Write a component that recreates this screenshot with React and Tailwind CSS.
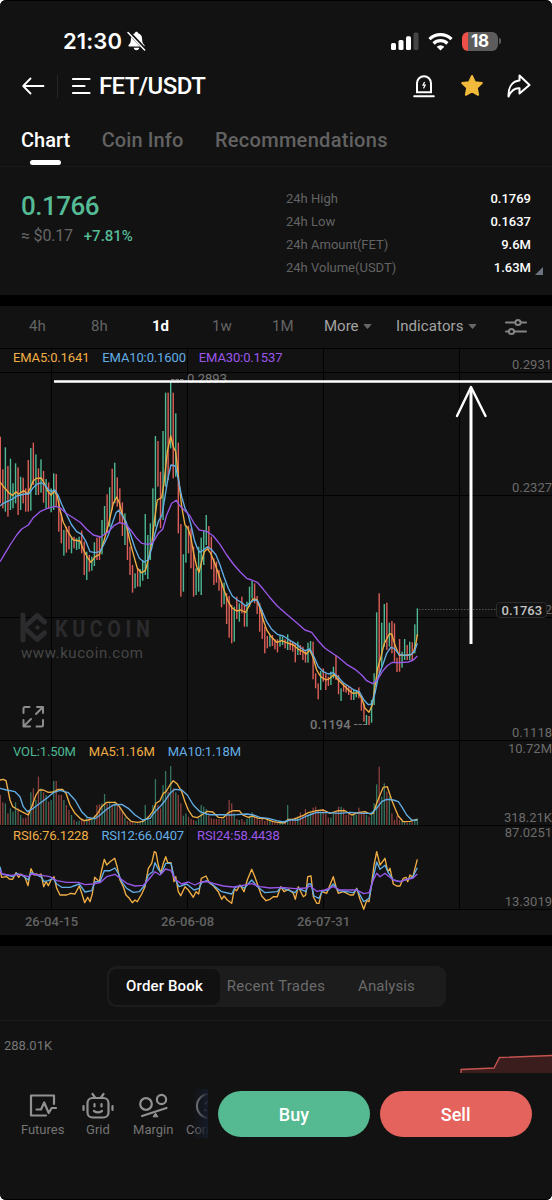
import React, { useState } from "react";

const GREEN = "#4db892";
const RED = "#dc5f59";
const ORANGE = "#f0ae45";
const BLUE = "#63aee6";
const PURPLE = "#9a57ea";

const STEP = 2.543;

// Candles: high, low (thirds of a pixel below the plot origin), g = up / r = down
const CANDLES_A =
  "230 430 r,328 445 r,262 455 g,318 470 r,296 450 g,370 445 g,310 430 g,322 465 r,350 450 g,353 430 r,385 455 r,300 455 r,264 452 g,248 375 r,283 405 g,325 405 r,298 398 g,333 428 r,357 445 g,367 445 r,385 457 g,340 450 g,342 440 r,420 515 r,460 550 r,510 587 g,500 578 r,498 568 r,530 580 g,530 565 r,535 570 g,530 567 g,512 580 r,545 645 r,575 660 g,585 635 r,590 632 g,547 618 g,533 600 r,530 600 r,480 583 g,438 525 g,403 520 r,382 500 g,326 450 r,308 430 g,352 440 r,385 490 r,427 528 r,460 555 g,500 600 r,560 645 r,615 698 r,640 685 g,625 680 r,627 680 g,600 662 g,462 645 g,525 657 g,490 600 g,385 530 g,228 500 g,243 380 r,335 505 r,213 480 g,98 380 g,98 360 r,65 265 g,98 355 r,160 350 g,248 520 r,492 710 r,583 695 g,497 608 g,497 580 r,505 625 r,560 710 r,625 705 g,560 695 g";
const CANDLES_B =
  "203 375 g,180 285 g,135 225 g,168 240 r,200 298 r,265 345 r,275 338 r,300 362 r,335 412 r,338 403 g,370 462 r,378 503 r,405 520 r,410 515 g,380 447 r,400 455 g,380 430 r,405 470 r,395 470 g,350 410 g,333 385 g,340 400 r,378 432 r,400 485 r,420 507 r,470 550 r,498 535 r,495 530 g,495 528 r,508 538 r,508 547 r,497 530 g,500 525 g,508 535 r,493 540 g,513 540 r,515 545 r,520 577 r,515 555 g,525 555 r,530 570 r,540 578 r,518 578 g,513 550 g,515 628 r,610 655 r,640 688 r,603 660 g,595 635 r,610 660 r,620 648 r,605 645 g,590 625 g,555 630 r,615 673 r,655 693 g,640 665 r,645 668 r,648 675 r,655 690 r,660 690 g,660 682 g,652 685 r,680 722 r,700 755 r,735 765 g,738 765 r,690 758 g,610 705 g,427 640 g,370 610 r,458 590 g,402 530 g,398 540 r,458 530 g,453 550 r,460 575 r,563 606 r,507 605 r,545 593 g,507 570 g,525 570 r,515 570 g,517 570 r,463 550 g,415 500 g";

const VOLUMES = [
  90, 68, 65, 35, 50, 40, 68, 50, 30, 20, 22, 45, 98, 110, 75, 145, 110, 98, 90, 70, 75, 132, 132, 90, 90, 75, 60, 45,
  30, 15, 10, 13, 15, 15, 22, 22, 18, 28, 60, 62, 65, 93, 65, 70, 62, 70, 60, 55, 40, 22, 12, 10, 8, 5, 5, 8, 15, 60,
  25, 15, 60, 138, 60, 50, 120, 162, 100, 177, 110, 98, 90, 65, 28, 35, 25, 18, 15, 12, 20, 60, 55, 48, 30, 20, 18, 18,
  18, 20, 18, 30, 75, 65, 35, 18, 15, 18, 10, 18, 25, 38, 22, 18, 15, 18, 12, 15, 15, 10, 8, 8, 6, 6, 8, 60, 18, 20,
  22, 25, 38, 30, 48, 30, 38, 52, 55, 45, 40, 48, 35, 22, 22, 35, 38, 55, 55, 50, 30, 35, 25, 30, 30, 52, 40, 40, 30,
  25, 40, 65, 122, 175, 85, 125, 100, 85, 35, 15, 28, 15, 12, 10, 8, 8, 10, 15, 20,
];

const parseCandles = (src, top) =>
  src.split(",").map((item) => {
    const [high, low, side] = item.split(" ");
    return { high: top + high / 3, low: top + low / 3, up: side === "g" };
  });

const candles = [...parseCandles(CANDLES_A, 12), ...parseCandles(CANDLES_B, 122)];

// Turns "x,y x,y" in thirds of a pixel into svg points
const pts = (src, left, top) =>
  src
    .split(" ")
    .map((p) => {
      const [x, y] = p.split(",");
      return `${(left + x / 3).toFixed(1)},${(top + y / 3).toFixed(1)}`;
    })
    .join(" ");

const LINES = [
  // EMA
  {
    color: ORANGE,
    points:
      pts("0,366 12,382 28,400 38,406 48,395 55,403 62,398 72,392 82,402 92,382 100,362 110,355 124,354 133,370 143,393 153,405 163,393 172,408 180,450 190,487 205,517 220,540 240,543 250,568 262,592 273,607 286,590 298,584 310,550 325,495 340,430 350,411 358,428 366,460 378,492 390,545 402,590 412,625 424,638 436,632 446,595 456,545 463,485 472,420 485,413 492,370 502,275 512,228 520,260 527,275 533,330 545,440 555,495 563,503 572,530 582,585 590,620 597,637 606,600", 0, 12) +
      " " +
      pts("13,245 22,236 32,250 45,282 60,325 72,360 85,395 95,413 110,423 122,420 137,427 147,408 158,387 170,388 180,415 190,450 200,480 215,502 230,517 245,512 260,518 280,525 295,538 310,545 318,552 330,540 340,565 350,600 362,620 378,630 390,625 402,613 415,630 430,645 445,660 458,670 475,668 485,685 495,715 507,727 517,705 525,650 533,595 543,560 553,520 560,507 568,492 575,492 585,525 597,555 610,556 630,555 640,548 648,520 652,493", 200, 122),
  },
  {
    color: BLUE,
    points:
      pts("0,438 10,430 22,424 36,418 50,408 62,405 75,402 86,402 98,385 110,373 124,368 136,376 146,390 155,394 165,390 174,405 185,433 200,465 215,495 230,515 245,523 258,545 270,575 285,578 300,575 312,553 325,525 337,490 348,458 356,451 366,465 378,485 392,525 405,565 418,595 432,606 445,600 455,565 465,520 475,485 486,465 495,410 505,350 513,315 526,318 533,350 545,410 555,445 563,460 573,495 583,540 592,565 600,577", 0, 12) +
      " " +
      pts("10,240 22,230 33,237 48,255 60,285 72,320 85,355 97,378 112,390 125,398 138,408 150,398 162,390 173,392 185,420 200,455 215,478 232,493 250,498 265,508 285,520 300,532 315,542 330,537 342,560 355,590 370,605 385,612 400,608 415,622 430,638 448,650 462,660 478,665 492,690 505,704 515,702 525,670 535,620 548,585 560,550 572,532 583,535 597,553 615,556 635,553 645,540 652,520", 200, 122),
  },
  {
    color: PURPLE,
    points:
      pts("0,605 15,580 32,552 50,525 65,507 85,495 100,473 120,455 140,446 165,439 180,443 200,461 222,475 242,488 260,508 280,525 302,531 325,515 342,497 358,488 376,492 392,510 410,535 425,550 445,553 460,546 475,520 488,508 500,465 515,430 529,421 540,438 555,452 570,468 582,490 598,510", 0, 12) +
      " " +
      pts("4,181 20,184 40,198 60,223 80,255 100,282 120,305 140,325 155,330 172,337 190,358 210,383 232,408 260,433 290,458 315,480 335,487 355,513 375,535 395,548 415,562 440,583 465,598 485,615 500,632 518,641 533,628 548,603 562,587 577,577 600,578 625,576 640,570 652,558", 200, 122),
  },
  // Volume averages
  {
    color: ORANGE,
    points:
      pts("0,120 10,118 18,122 24,150 30,180 38,200 50,207 65,215 85,225 95,200 108,165 118,150 130,150 145,157 160,156 175,148 187,148 198,160 210,195 225,220 240,235 252,242 265,240 280,235 292,222 305,200 320,187 345,187 355,195 368,215 380,232 393,244 412,247 430,244 445,232 458,215 468,190 480,182 490,160 498,155 510,135 520,122 532,132 545,155 555,185 565,210 578,230 592,233 605,225 622,214", 0, 392) +
      " " +
      pts("8,216 25,232 40,233 55,218 70,212 88,212 98,225 115,232 127,228 145,235 165,236 190,245 210,248 225,248 235,238 250,238 265,232 280,226 295,218 320,212 340,210 360,220 385,212 405,212 425,225 445,218 465,215 480,222 490,220 500,190 510,165 520,142 532,140 545,180 555,205 565,228 580,245 600,244 622,238", 210, 392),
  },
  {
    color: BLUE,
    points:
      pts("0,145 20,150 45,155 60,170 70,200 82,215 100,205 120,190 140,175 160,158 180,151 205,158 225,180 245,215 262,232 285,236 300,225 320,208 340,195 365,193 385,205 405,225 428,240 450,235 465,215 480,200 495,182 510,160 525,148 545,150 562,165 580,195 600,215 620,222", 0, 392) +
      " " +
      pts("0,224 40,224 60,225 80,224 110,222 130,225 150,232 175,235 200,242 220,246 240,240 265,240 290,228 320,217 350,218 390,220 420,217 460,220 485,220 500,205 515,185 530,178 550,180 565,185 575,200 590,225 605,240 622,241", 210, 392),
  },
  // RSI
  {
    color: ORANGE,
    points:
      pts("0,390 5,412 20,410 28,417 38,418 48,398 56,412 62,402 75,412 84,437 93,386 102,405 110,402 117,405 123,402 131,440 138,425 145,437 153,420 162,410 170,445 180,465 200,465 212,460 225,462 238,438 247,465 254,488 263,472 270,485 277,462 284,412 298,425 305,390 313,358 320,375 330,365 344,355 352,382 360,420 370,440 378,465 388,475 397,488 405,480 412,485 425,462 435,440 445,385 455,370 463,335 468,338 475,375 482,400 490,370 497,350 503,368 513,368 522,425 527,410 535,455 542,467 555,440 565,450 580,472 588,455 596,462 604,415 618,408 628,428", 0, 392) +
      " " +
      pts("10,437 25,455 35,478 42,468 52,480 65,490 73,447 80,452 90,435 102,455 112,420 125,388 135,412 145,440 155,468 168,482 180,478 190,470 202,470 212,440 222,455 235,448 250,460 256,478 265,440 280,470 287,465 293,410 303,408 310,470 320,490 327,490 335,455 350,460 358,440 370,410 378,440 385,460 400,455 420,465 430,465 440,445 450,478 461,508 470,482 477,485 485,430 492,375 500,335 510,375 525,355 533,395 540,385 550,432 560,438 570,438 580,415 588,412 593,425 600,405 608,412 615,385 622,358", 210, 392),
  },
  {
    color: BLUE,
    points:
      pts("0,380 5,402 20,405 38,410 50,400 70,408 85,420 93,398 110,405 125,412 132,425 145,422 160,415 170,432 185,442 210,442 238,432 255,456 275,452 285,425 300,425 313,392 330,392 345,384 355,400 365,425 380,445 400,457 418,455 435,435 445,405 458,395 465,368 475,388 485,400 497,370 513,370 522,410 537,440 560,432 582,450 597,445 605,428 620,422", 0, 392) +
      " " +
      pts("5,432 35,455 65,462 75,443 92,437 103,445 125,420 140,438 165,458 202,455 212,442 255,458 265,445 288,455 295,432 303,432 312,468 327,475 337,453 355,450 370,432 385,452 430,458 440,447 461,485 477,475 488,420 500,366 510,388 525,376 535,398 550,420 570,425 590,418 608,412 622,383", 210, 392),
  },
  {
    color: PURPLE,
    points:
      pts("0,390 6,402 35,406 60,403 85,410 95,402 125,406 150,410 170,422 200,427 235,427 255,434 278,432 300,428 320,410 345,403 360,415 380,430 405,438 430,436 445,420 465,395 480,405 497,387 513,392 525,418 545,432 565,426 585,435 605,425 625,425", 0, 392) +
      " " +
      pts("10,430 40,438 70,441 95,437 125,431 150,440 180,444 215,442 255,446 290,444 300,438 320,454 345,450 370,440 390,450 440,450 461,461 477,458 490,420 500,400 510,410 525,400 535,408 550,420 570,425 590,418 608,415 622,402", 210, 392),
  },
];

const AXIS_LABELS = [
  { y: 21, text: "0.2931" },
  { y: 144, text: "0.2327" },
  { y: 266, text: "0.1722" },
  { y: 389, text: "0.1118" },
  { y: 404.5, text: "10.72M" },
  { y: 473.5, text: "318.21K" },
  { y: 489, text: "87.0251" },
  { y: 558, text: "13.3019" },
];

const STATS = [
  ["24h High", "0.1769"],
  ["24h Low", "0.1637"],
  ["24h Amount(FET)", "9.6M"],
  ["24h Volume(USDT)", "1.63M"],
];

const StatusBar = () => (
  <div className="flex h-[59px] shrink-0 items-end justify-between pr-[51px] pb-[5px] pl-[63px]">
    <div className="flex items-center gap-[5px]">
      <span className="font-['Inter',sans-serif] text-[22px] leading-[26px] font-semibold tracking-[0.1px] text-white">
        21:30
      </span>
      <svg width="19" height="20" viewBox="0 0 19 20">
        <path
          d="M9.5 .8c.9 0 1.5.6 1.6 1.4 2.500.7 4 2.800 4 5.500 0 3.500.8 4.800 2.300 6.300.4.4.3 1.400-.5 1.400H2.100c-.8 0-.9-1-.5-1.400C3.100 12.500 3.900 11.200 3.900 7.700c0-2.700 1.500-4.800 4-5.500C8 1.400 8.600.8 9.500.8zM6.700 16.800h5.600c-.2 1.600-1.300 2.500-2.800 2.500s-2.600-.9-2.800-2.500z"
          fill="#fff"
        />
        <path d="M1.800 1.200 18.200 18.600" stroke="#121212" strokeWidth="3.400" />
        <path d="M1 1.500 17.600 18.900" stroke="#fff" strokeWidth="1.500" strokeLinecap="round" />
      </svg>
    </div>

    <div className="flex items-center gap-[9px] pb-[3px]">
      <svg width="28" height="20" viewBox="0 0 28 20">
        <rect x="0" y="12" width="5" height="7" rx="1.500" fill="#fff" />
        <rect x="7.500" y="9" width="5" height="10" rx="1.500" fill="#fff" />
        <rect x="15" y="5.200" width="5" height="13.800" rx="1.500" fill="#fff" />
        <rect x="22.500" y="1.500" width="5" height="17.500" rx="1.500" fill="#454545" />
      </svg>
      <svg width="25" height="19" viewBox="0 0 25 19">
        <g fill="none" stroke="#fff" strokeWidth="3.200">
          <path d="M1.500 7.100a15.800 15.800 0 0 1 22 0" />
          <path d="M5.600 11.500a9.800 9.800 0 0 1 13.800 0" />
        </g>
        <path d="M12.500 18.600 8.700 14.700a5.400 5.400 0 0 1 7.600 0z" fill="#fff" />
      </svg>
      <div className="flex items-center gap-px">
        <div className="flex h-[19px] w-[36px] items-center justify-center overflow-hidden rounded-[6px] bg-linear-to-r from-[#ee4f48] from-[18%] to-[#5c5c5c] to-[18%]">
          <span className="font-['Inter',sans-serif] text-[17px] leading-none font-bold tracking-[-0.3px] text-white">
            18
          </span>
        </div>
        <div className="h-[6px] w-[2px] rounded-r-full bg-[#5c5c5c]" />
      </div>
    </div>
  </div>
);

const Header = () => (
  <div className="flex h-[54px] shrink-0 items-center justify-between pr-[21px] pl-[22px]">
    <div className="flex items-center">
      <svg width="23" height="18" viewBox="0 0 23 18" fill="none" stroke="#fff" strokeWidth="1.800">
        <path d="M8.500 1.500 1.200 9l7.300 7.500M1.200 9H21.500" strokeLinecap="round" strokeLinejoin="round" />
      </svg>
      <div className="ml-[12px] h-[23px] w-px bg-[#262626]" />
      <svg className="ml-[14px]" width="20" height="18" viewBox="0 0 20 18" stroke="#fff" strokeWidth="2.200">
        <path d="M1 2h16.500M1 9h11.500M1 16h16.500" strokeLinecap="round" />
      </svg>
      <h1 className="ml-[7px] text-[24px] leading-7 font-medium tracking-[-0.600px] text-white">FET/USDT</h1>
    </div>
    <div className="flex items-center">
      <svg width="22" height="24" viewBox="0 0 22 24" fill="none" stroke="#fff" strokeWidth="2">
        <path d="M4 18.200V9.200a7 7 0 0 1 14 0v9z" />
        <path d="M1.200 22.300h19.600" strokeLinecap="round" />
        <path d="M11.600 8 10 11.200h2.200l-1.700 3.200" strokeWidth="1.200" />
      </svg>
      <svg className="ml-[25px]" width="24" height="24" viewBox="0 0 24 24">
        <path
          d="M12 2 14.900 8.200l6.900.9-5 4.800 1.300 6.900-6.100-3.400-6.100 3.400 1.300-6.900-5-4.800 6.900-.9z"
          fill="#f2b93b"
          stroke="#f2b93b"
          strokeWidth="2"
          strokeLinejoin="round"
        />
      </svg>
      <svg className="ml-[23px]" width="24" height="24" viewBox="0 0 24 24" fill="none" stroke="#fff" strokeWidth="2">
        <path
          d="M12.500 1.500 22.500 11 12.500 19.500v-5.200c-4.200-.5-8 1.500-11 8.200C1.200 13 5.300 7.300 12.500 6.600z"
          strokeLinejoin="round"
        />
      </svg>
    </div>
  </div>
);

const TABS = [
  { name: "Chart", tracking: "tracking-normal" },
  { name: "Coin Info", tracking: "tracking-[0.1px]" },
  { name: "Recommendations", tracking: "tracking-[0.3px]" },
];

const Tabs = () => {
  const [active, setActive] = useState("Chart");
  return (
    <div className="flex h-[54px] shrink-0 gap-[31.500px] border-b border-[#191919] pt-[14px] pl-[21px] text-[20px] leading-[26px] font-medium">
      {TABS.map(({ name, tracking }) => (
        <button
          key={name}
          onClick={() => setActive(name)}
          className={`flex flex-col items-center ${tracking} ${active === name ? "text-white" : "text-[#626262]"}`}
        >
          {name}
          {active === name && <span className="mt-[7px] h-[5px] w-[31px] rounded-full bg-white" />}
        </button>
      ))}
    </div>
  );
};

const Summary = () => (
  <div className="flex h-[128px] shrink-0 justify-between pr-[9px] pl-[21px]">
    <div className="pt-[24px]">
      <div className="text-[26px] leading-[30px] font-medium tracking-[-0.500px] text-[#55bb95]">0.1766</div>
      <div className="mt-[5px] flex gap-[11px] text-[16px] leading-5">
        <span className="tracking-[-0.200px] text-[#666]">≈ $0.17</span>
        <span className="text-[15px] font-medium text-[#55bb95]">+7.81%</span>
      </div>
    </div>
    <div className="flex items-end pb-[14px]">
      <div className="w-[245px] self-start pt-[20px]">
        {STATS.map(([label, value]) => (
          <div key={label} className="flex h-[23px] items-center justify-between text-[13px]">
            <span className="text-[#636363]">{label}</span>
            <span className="font-medium text-white">{value}</span>
          </div>
        ))}
      </div>
      <svg className="mb-[6px] ml-[4px]" width="8" height="8" viewBox="0 0 8 8">
        <path d="M8 0v8H0z" fill="#6d7482" />
      </svg>
    </div>
  </div>
);

const Caret = () => (
  <svg width="9" height="7" viewBox="0 0 9 7">
    <path d="M1 1.500h7L4.500 5.500z" fill="#666" stroke="#666" strokeLinejoin="round" />
  </svg>
);

const Intervals = () => (
  <div className="flex h-[42px] shrink-0 items-center pb-px pl-[29px] text-[15px] text-[#646464]">
    <span className="w-[62px]">4h</span>
    <span className="w-[61px]">8h</span>
    <span className="w-[60px] font-bold text-white">1d</span>
    <span className="w-[60px]">1w</span>
    <span className="w-[52px]">1M</span>
    <span className="flex w-[72px] items-center gap-[4px] text-[#a3a3a3]">
      More <Caret />
    </span>
    <span className="flex w-[109px] items-center gap-[4px] tracking-[0.100px] text-[#a3a3a3]">
      Indicators <Caret />
    </span>
    <svg width="22" height="18" viewBox="0 0 22 18" fill="none" stroke="#848484" strokeWidth="2" strokeLinecap="round">
      <path d="M1 4.500h9M16 4.500h5" />
      <circle cx="13" cy="4.500" r="2.600" />
      <path d="M1 13.500h2.500M9.500 13.500H21" />
      <circle cx="6.500" cy="13.500" r="2.600" />
    </svg>
  </div>
);

const Legend = ({ items, className }) => (
  <div className={`absolute left-[13px] flex text-[13px] leading-4 tracking-[-0.130px] ${className}`}>
    {items.map(([text, color]) => (
      <span key={text} className={color}>
        {text}
      </span>
    ))}
  </div>
);

const PriceChart = () => (
  <div className="relative h-[587px] shrink-0 overflow-hidden">
    <svg width="552" height="587" viewBox="0 0 552 587" className="font-['Roboto',sans-serif]">
      {/* Grid */}
      <path
        d="M0 .5h552M0 24.500h552M0 147.500h552M0 269.500h552M0 392.500h552M0 477.500h552M0 561.500h552M51.500 0v561M187.500 0v561M323.500 0v561M459.500 0v561"
        stroke="#020202"
        fill="none"
      />

      {/* Watermark */}
      <g fill="none" stroke="#2b2b2d" strokeWidth="5" strokeLinejoin="round">
        <path d="M23 267v25" strokeLinecap="round" />
        <path d="M24 279.500 37 267.500 44.500 274M24 279.500 37 291.500 44.500 285" strokeLinecap="round" />
        <path d="M37.500 276.700 40.300 279.500 37.500 282.300 34.700 279.500z" fill="#2b2b2d" stroke="none" />
      </g>
      <text
        transform="translate(55 288.500) scale(0.84 1)"
        fontSize="23.500"
        fontWeight="700"
        fill="#2b2b2d"
        textLength="113"
      >
        KUCOIN
      </text>
      <text x="21" y="310" fontSize="15" fill="#464646" textLength="122">
        www.kucoin.com
      </text>

      {/* Axis */}
      {AXIS_LABELS.map(({ y, text }) => (
        <text key={text} x="552" y={y} textAnchor="end" fontSize="13" fill="#6b6b6b">
          {text}
        </text>
      ))}
      {[
        [51.5, "26-04-15"],
        [187.5, "26-06-08"],
        [323.5, "26-07-31"],
      ].map(([x, text]) => (
        <text key={text} x={x} y="578" textAnchor="middle" fontSize="13" fontWeight="500" fill="#636363">
          {text}
        </text>
      ))}

      {/* Volume bars */}
      {VOLUMES.map((v, i) => (
        <rect
          key={i}
          x={0.3 + i * STEP - 0.65}
          y={477 - v / 3}
          width="1.3"
          height={v / 3}
          fill={candles[i].up ? GREEN : RED}
          opacity="0.6"
        />
      ))}

      {/* Candles */}
      {candles.map((c, i) => (
        <rect
          key={i}
          x={0.3 + i * STEP - 0.7}
          y={c.high}
          width="1.4"
          height={c.low - c.high}
          fill={c.up ? GREEN : RED}
        />
      ))}

      {LINES.map((line, i) => (
        <polyline
          key={i}
          points={line.points}
          fill="none"
          stroke={line.color}
          strokeWidth="1.35"
          strokeLinejoin="round"
        />
      ))}

      {/* High and low marks */}
      <path d="M171 31.500h12.500M354 376.500h13" stroke="#777" strokeDasharray="3.500 1" />
      <text x="187" y="35" fontSize="13" fill="#777">
        0.2893
      </text>
      <text x="310" y="380.500" fontSize="13" fontWeight="500" fill="#777">
        0.1194
      </text>

      {/* Last price */}
      <path d="M419 261.500h78" stroke="#555" strokeDasharray="1.500 1.500" />
      <rect x="496.500" y="254.500" width="50" height="15" rx="3" fill="#121212" stroke="#2c2c2c" />
      <text x="501.500" y="266.700" fontSize="13" fontWeight="500" fill="#c4c4c4">
        0.1763
      </text>

      {/* Hand drawn target */}
      <path d="M54 33.500h498" stroke="#fff" strokeWidth="2.600" />
      <path d="M471 296V40" stroke="#fff" strokeWidth="3" />
      <path
        d="M457 68 471 39 485.500 68"
        stroke="#fff"
        strokeWidth="2.400"
        fill="none"
        strokeLinejoin="round"
        strokeLinecap="round"
      />

      {/* Fullscreen */}
      <g
        fill="none"
        stroke="#8c8c8c"
        strokeWidth="2"
        strokeLinecap="round"
        strokeLinejoin="round"
        transform="translate(22.500 358)"
      >
        <path d="M1 7V2.500Q1 1 2.500 1H7M20.500 14v5q0 1.500-1.500 1.500h-5M13.500 8 20.500 1M14.500 1h6v6M8.500 13 1 20.500M1 14v6.500h6.500" />
      </g>
    </svg>

    <Legend
      className="top-[2px] gap-[13px]"
      items={[
        ["EMA5:0.1641", "text-[#f0ae45]"],
        ["EMA10:0.1600", "text-[#63aee6]"],
        ["EMA30:0.1537", "text-[#9a57ea]"],
      ]}
    />
    <Legend
      className="top-[396px] gap-[13px]"
      items={[
        ["VOL:1.50M", "text-[#4db892]"],
        ["MA5:1.16M", "text-[#f0ae45]"],
        ["MA10:1.18M", "text-[#63aee6]"],
      ]}
    />
    <Legend
      className="top-[480px] gap-[13px]"
      items={[
        ["RSI6:76.1228", "text-[#f0ae45]"],
        ["RSI12:66.0407", "text-[#63aee6]"],
        ["RSI24:58.4438", "text-[#9a57ea]"],
      ]}
    />
  </div>
);

const OrderTabs = () => (
  <div className="flex h-[75px] shrink-0 items-start justify-center border-b border-[#1a1a1a] pt-[20px]">
    <div className="flex h-[41px] w-[339px] items-center rounded-[9px] bg-[#1c1c1c] p-[2.500px] text-[15px] text-[#6a6a6a]">
      <span className="flex h-full w-[111px] items-center justify-center rounded-[8px] bg-[#111] font-medium tracking-[0.150px] text-white">
        Order Book
      </span>
      <span className="flex w-[112px] justify-center tracking-[0.250px]">Recent Trades</span>
      <span className="flex flex-1 justify-center pr-[2px] tracking-[0.100px]">Analysis</span>
    </div>
  </div>
);

const Depth = () => (
  <div className="flex h-[52px] shrink-0 items-end justify-between">
    <span className="mb-[19px] ml-[4px] text-[13px] leading-4 text-[#757575]">288.01K</span>
    <svg width="92" height="20" viewBox="0 0 92 20">
      <path d="M1 20v-3.500l33-1.500 5.500-10.500L92 2.500V20z" fill="#3a1d1c" />
      <path d="M1 20v-3.500l33-1.500 5.500-10.500L92 2.500" fill="none" stroke="#c4544f" strokeWidth="1.400" />
    </svg>
  </div>
);

const FuturesIcon = () => (
  <svg width="28" height="26" viewBox="0 0 28 26" fill="none" stroke="#919191" strokeWidth="2.200">
    <path
      d="M25 11V2.500H2V22.500h15M7.500 16.500h4.500l3.200-7 4.500 10.500 3-5H27"
      strokeLinecap="round"
      strokeLinejoin="round"
    />
  </svg>
);

const GridIcon = () => (
  <svg width="32" height="28" viewBox="0 0 32 28" fill="none" stroke="#919191" strokeWidth="2.200" strokeLinecap="round">
    <rect x="5.500" y="6" width="21" height="19.500" rx="5" />
    <path d="M13 5.500 10.500 2M19 5.500 21.500 2M1.500 14v4M30.500 14v4M12.500 12v2.500M19.500 12v2.500M12 19q4 2.800 8 0" />
  </svg>
);

const MarginIcon = () => (
  <svg width="30" height="26" viewBox="0 0 30 26" fill="none" stroke="#919191" strokeWidth="2.200">
    <circle cx="8" cy="11" r="5.800" />
    <circle cx="23.500" cy="6.500" r="4.600" />
    <path d="M4 23 28.500 15" strokeLinecap="round" />
    <path d="M17.500 20 20 23.800h-5z" fill="#919191" strokeWidth="1" />
  </svg>
);

const ConvertIcon = () => (
  <svg width="28" height="28" viewBox="0 0 28 28" fill="none" stroke="#919191" strokeWidth="2">
    <circle cx="14" cy="14" r="12" />
    <path d="M9 18l3 .5M10 12l3-3" strokeWidth="1.600" />
  </svg>
);

const NAV = [
  { label: "Futures", Icon: FuturesIcon },
  { label: "Grid", Icon: GridIcon },
  { label: "Margin", Icon: MarginIcon },
  { label: "Convert", Icon: ConvertIcon },
];

const BottomBar = () => (
  <div className="flex h-[127px] shrink-0 items-start pt-[16px] pr-[20.500px]">
    <div className="relative flex w-[208px] overflow-hidden pl-[15px]">
      {NAV.map(({ label, Icon }) => (
        <div key={label} className="flex w-[55.300px] shrink-0 flex-col items-center">
          <div className="flex h-[33px] items-center justify-center">
            <Icon />
          </div>
          <span className="text-[13px] leading-4 text-[#747474]">{label}</span>
        </div>
      ))}
      <div className="absolute inset-y-0 right-0 w-[16px] bg-linear-to-r from-[#121722]/0 to-[#151b29]/95" />
    </div>
    <div className="ml-[10px] flex flex-1 gap-[10px] pt-[2px] text-[18px] font-medium text-white">
      <button className="h-[46px] flex-1 rounded-full bg-[#55b991]">Buy</button>
      <button className="h-[46px] flex-1 rounded-full bg-[#e5635d]">Sell</button>
    </div>
  </div>
);

export default function App() {
  return (
    <div className="h-[1200px] w-[552px] overflow-hidden bg-white">
      <div className="flex h-full w-full flex-col overflow-hidden rounded-[6px] bg-[#121212] font-['Roboto',sans-serif] shadow-[inset_0_1px_0_#000,inset_0_-1px_0_#000]">
        <StatusBar />
        <Header />
        <Tabs />
        <Summary />
        <div className="h-[11px] shrink-0 bg-black" />
        <Intervals />
        <PriceChart />
        <div className="h-[11px] shrink-0 bg-black" />
        <OrderTabs />
        <Depth />
        <BottomBar />
      </div>
    </div>
  );
}
